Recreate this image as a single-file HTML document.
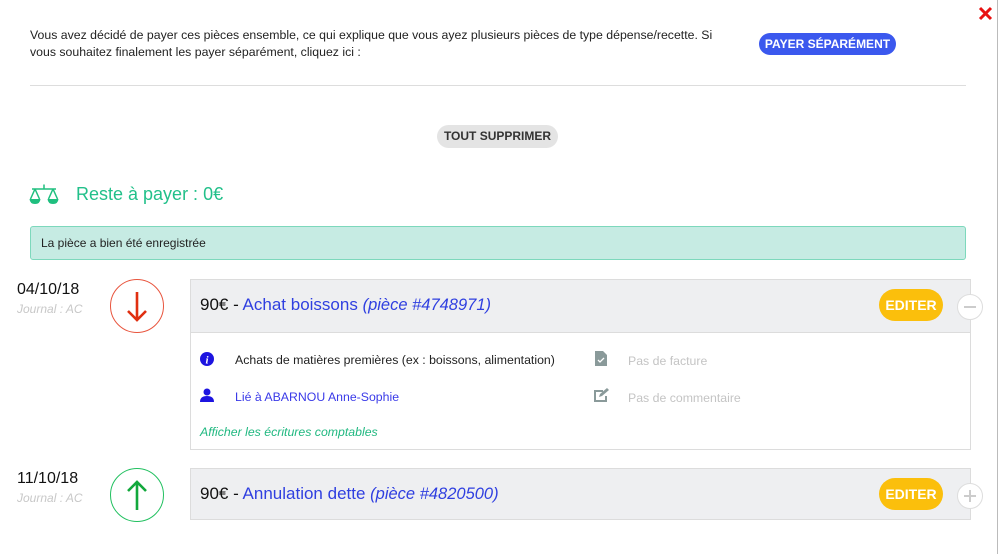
<!DOCTYPE html>
<html><head><meta charset="utf-8"><style>
body{margin:0;width:1000px;height:554px;position:relative;overflow:hidden;background:#fff;font-family:"Liberation Sans",sans-serif;color:#222}
.a{position:absolute;white-space:nowrap}
.btn{position:absolute;border-radius:12px;font-weight:bold;font-size:12px;text-align:center}
.card{position:absolute;left:190px;width:781px;border:1px solid #dcdcdc;box-sizing:border-box}
.hd{background:#eeeff1;height:52px;position:relative}
.ed{position:absolute;right:27px;top:9px;width:64px;height:32px;border-radius:16px;background:#fbbf0c;color:#fff;font-weight:bold;font-size:14px;line-height:32px;text-align:center}
.circ{position:absolute;width:54px;height:54px;border-radius:50%;box-sizing:border-box}
.pm{position:absolute;width:26px;height:26px;border-radius:50%;border:1px solid #ddd;background:#fff;box-sizing:border-box}
</style></head><body>
<div style="position:absolute;left:997px;top:0;width:1px;height:554px;background:#bbb"></div>
<div class="a" style="left:30px;top:27px;font-size:12.3px;line-height:17px;color:#222">Vous avez décidé de payer ces pièces ensemble, ce qui explique que vous ayez plusieurs pièces de type dépense/recette. Si<br>vous souhaitez finalement les payer séparément, cliquez ici :</div>
<div class="btn" style="left:759px;top:33px;width:137px;height:22px;line-height:22px;background:#3b58ee;color:#fff;border-radius:11px">PAYER SÉPARÉMENT</div>
<svg class="a" style="left:978px;top:6px" width="15" height="15" viewBox="0 0 15 15"><path d="M2 2L13 13M13 2L2 13" stroke="#e81010" stroke-width="3"/></svg>
<div style="position:absolute;left:30px;top:85px;width:936px;height:1px;background:#ddd"></div>
<div class="btn" style="left:437px;top:125px;width:121px;height:23px;line-height:23px;background:#e4e4e4;color:#333">TOUT SUPPRIMER</div>
<svg class="a" style="left:29px;top:184px" width="30" height="22" viewBox="0 0 30 22" fill="none" stroke="#1fbf7f" stroke-width="1.5"><path d="M15 0.5V5M3 5H27M6 5L1.5 15M6 5L10.5 15M24 5L19.5 15M24 5L28.5 15"/><path d="M0.5 15H11.5Q11 20 6 20Q1 20 0.5 15ZM18.5 15H29.5Q29 20 24 20Q19 20 18.5 15Z" fill="#1fbf7f" stroke="none"/></svg>
<div class="a" style="left:76px;top:184px;font-size:18px;color:#22c08a">Reste à payer : 0€</div>
<div style="position:absolute;left:30px;top:226px;width:936px;height:34px;box-sizing:border-box;background:#c6ebe3;border:1px solid #7dd8bc;border-radius:3px;font-size:12px;line-height:32px;padding-left:10px">La pièce a bien été enregistrée</div>

<div class="a" style="left:17px;top:281px;font-size:16px;color:#111">04/10/18</div>
<div class="a" style="left:17px;top:302px;font-size:12px;font-style:italic;color:#c8c8c8">Journal : AC</div>
<div class="circ" style="left:110px;top:279px;border:1px solid #e8553e"></div>
<svg class="a" style="left:125px;top:290px" width="24" height="34" viewBox="0 0 24 34"><path d="M12 2V30M3 21L12 30L21 21" stroke="#e02f10" stroke-width="2.6" fill="none"/></svg>
<div class="card" style="top:279px;height:171px">
 <div class="hd" style="border-bottom:1px solid #dcdcdc"><div class="a" style="left:9px;top:15px;font-size:17px;color:#111">90€ - <span style="color:#2f3fe0">Achat boissons</span> <i style="color:#2f3fe0;font-size:16.5px">(pièce #4748971)</i></div><div class="ed">EDITER</div></div>
 <svg class="a" style="left:9px;top:72px" width="14" height="14"><circle cx="7" cy="7" r="7" fill="#1d14e0"/><text x="7" y="11.5" font-size="11" font-weight="bold" font-style="italic" fill="#fff" text-anchor="middle" font-family="Liberation Serif">i</text></svg>
 <div class="a" style="left:44px;top:73px;font-size:12.3px;color:#222">Achats de matières premières (ex : boissons, alimentation)</div>
 <svg class="a" style="left:9px;top:108px" width="14" height="14"><circle cx="7" cy="4" r="3.5" fill="#1d14e0"/><path d="M0 14Q0 8 7 8Q14 8 14 14Z" fill="#1d14e0"/></svg>
 <div class="a" style="left:44px;top:110px;font-size:12.3px;color:#3a3ae8">Lié à ABARNOU Anne-Sophie</div>
 <div class="a" style="left:9px;top:145px;font-size:12.3px;font-style:italic;color:#20b880">Afficher les écritures comptables</div>
 <svg class="a" style="left:404px;top:71px" width="12" height="15"><path d="M0 0H8L12 4V15H0Z" fill="#8a9a9a"/><path d="M3 9L5 11L9 7" stroke="#fff" stroke-width="1.3" fill="none"/></svg>
 <div class="a" style="left:437px;top:74px;font-size:12.3px;color:#c4c4c4">Pas de facture</div>
 <svg class="a" style="left:403px;top:108px" width="15" height="14"><path d="M0 2H9V4H2V12H11V8H13V14H0Z" fill="#8a9a9a"/><path d="M5 9L6 6L13 0L15 2L8 8Z" fill="#8a9a9a"/></svg>
 <div class="a" style="left:437px;top:111px;font-size:12.3px;color:#c4c4c4">Pas de commentaire</div>
</div>
<div class="pm" style="left:957px;top:294px"><div style="position:absolute;left:6px;top:11px;width:12px;height:2px;background:#ccc"></div></div>

<div class="a" style="left:17px;top:470px;font-size:16px;color:#111">11/10/18</div>
<div class="a" style="left:17px;top:491px;font-size:12px;font-style:italic;color:#c8c8c8">Journal : AC</div>
<div class="circ" style="left:110px;top:468px;border:1px solid #22c060"></div>
<svg class="a" style="left:125px;top:478px" width="24" height="34" viewBox="0 0 24 34"><path d="M12 32V4M3 13L12 4L21 13" stroke="#12a83c" stroke-width="2.6" fill="none"/></svg>
<div class="card" style="top:468px;height:52px"><div class="hd" style="height:50px"><div class="a" style="left:9px;top:15px;font-size:17px;color:#111">90€ - <span style="color:#2f3fe0">Annulation dette</span> <i style="color:#2f3fe0;font-size:16.5px">(pièce #4820500)</i></div><div class="ed">EDITER</div></div></div>
<div class="pm" style="left:957px;top:483px"><div style="position:absolute;left:6px;top:11px;width:12px;height:2px;background:#ccc"></div><div style="position:absolute;left:11px;top:6px;width:2px;height:12px;background:#ccc"></div></div>
</body></html>
